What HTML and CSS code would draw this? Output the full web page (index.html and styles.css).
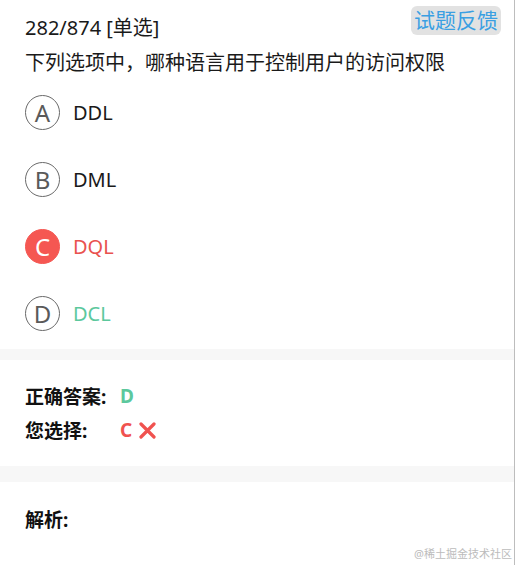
FILE: index.html
```html
<!DOCTYPE html>
<html lang="zh-CN">
<head>
  <meta charset="UTF-8" />
  <title>试题</title>
  <link rel="stylesheet" href="styles.css">
</head>
<body>
  <div class="page">
    <div class="header">
      <span class="count">282/874 [单选]</span>
      <span class="feedback">试题反馈</span>
    </div>
    <div class="question">下列选项中，哪种语言用于控制用户的访问权限</div>

    <div class="options">
      <div class="option">
        <span class="circle">A</span>
        <span class="label">DDL</span>
      </div>
      <div class="option">
        <span class="circle">B</span>
        <span class="label">DML</span>
      </div>
      <div class="option wrong">
        <span class="circle">C</span>
        <span class="label">DQL</span>
      </div>
      <div class="option right">
        <span class="circle">D</span>
        <span class="label">DCL</span>
      </div>
    </div>

    <div class="band"></div>

    <div class="result">
      <div class="row">
        <span class="key">正确答案:</span>
        <span class="val green">D</span>
      </div>
      <div class="row">
        <span class="key">您选择:</span>
        <span class="val red">C</span>
        <svg class="cross" width="17" height="17" viewBox="0 0 17 17">
          <path d="M2 2 L15 15 M15 2 L2 15" stroke="#f0524f" stroke-width="3.2" stroke-linecap="round" fill="none"/>
        </svg>
      </div>
    </div>

    <div class="band band-2"></div>

    <div class="analysis">
      <span class="key">解析:</span>
    </div>

    <div class="mark">@稀土掘金技术社区</div>
  </div>
</body>
</html>
```

FILE: styles.css
```css
body {
  margin: 0;
  background: #fff;
  font-family: "Noto Sans", "Noto Sans CJK SC", sans-serif;
  color: #1a1a1a;
}
.page {
  position: relative;
  width: 515px;
  height: 565px;
  border-right: 1px solid #bdbdbd;
  box-sizing: border-box;
  overflow: hidden;
}
.header {
  display: flex;
  justify-content: space-between;
  align-items: flex-start;
  padding: 6px 13px 0 25px;
}
.count {
  margin-top: 10px;
  font-size: 20px;
  line-height: 24px;
}
.feedback {
  background: #e2e2e2;
  color: #3a9fe2;
  font-size: 21px;
  line-height: 29px;
  padding: 0 3px;
  border-radius: 6px;
}
.question {
  margin-top: 11px;
  padding-left: 25px;
  font-size: 20px;
  line-height: 24px;
}
.options {
  padding-top: 4px;
}
.option {
  display: flex;
  align-items: center;
  height: 67px;
  padding-left: 25px;
}
.circle {
  width: 33px;
  height: 33px;
  border: 1px solid #6a6a6a;
  border-radius: 50%;
  display: flex;
  align-items: center;
  justify-content: center;
  font-size: 24px;
  color: #5a5a5a;
}
.label {
  margin-left: 13px;
  font-size: 20px;
}
.wrong .circle {
  background: #f55752;
  border-color: #f55752;
  color: #fff;
}
.wrong .label {
  color: #e9524f;
}
.right .label {
  color: #5cc89d;
}
.band {
  margin-top: 2px;
  height: 11px;
  background: #f7f7f7;
}
.band-2 {
  margin-top: 0;
  height: 16px;
}
.result {
  padding: 19px 0 19px 25px;
}
.row {
  display: flex;
  align-items: center;
  height: 34px;
}
.key {
  font-size: 19px;
  font-weight: bold;
  color: #111;
}
.row .key {
  width: 95px;
}
.val {
  font-size: 19px;
  font-weight: bold;
}
.green {
  color: #5cc89d;
}
.red {
  color: #f0524f;
}
.cross {
  margin-left: 7px;
}
.analysis {
  padding: 26px 0 0 25px;
  line-height: 24px;
}
.mark {
  position: absolute;
  right: 2px;
  bottom: 4px;
  font-size: 11px;
  color: #bcbcbc;
}
```
